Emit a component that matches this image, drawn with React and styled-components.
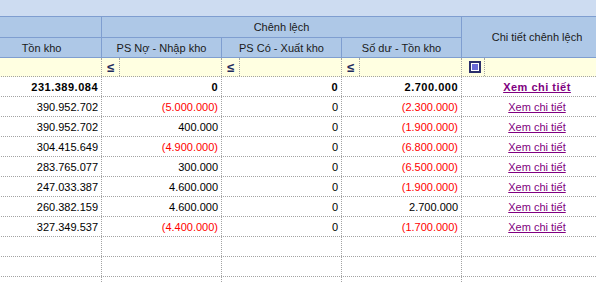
import React from 'react';
import styled, { createGlobalStyle } from 'styled-components';

const GlobalStyle = createGlobalStyle`
    html, body { margin: 0; padding: 0; background: #fff; }
    body { font-family: "Liberation Sans", Arial, sans-serif; font-size: 11px; color: #000; }
`;

const COLS = '120px 120px 120px 120px 150px';

const Viewport = styled.div`
    width: 596px;
    height: 283px;
    overflow: hidden;
    background: #fff;
`;

const Sheet = styled.div`
    width: 630px;
    margin-left: -18px;
`;

const TopBand = styled.div`
    height: 16px;
    background: #cddcf1;
    border-bottom: 1px solid #7f9ed0;
`;

const Header = styled.div`
    display: grid;
    grid-template-columns: ${COLS};
    grid-template-rows: 21px 20px;
    background: #aec8e7;
`;

const HeadCell = styled.div`
    box-sizing: border-box;
    display: flex;
    align-items: center;
    justify-content: center;
    color: #1a1a1a;
    border-bottom: 1px solid #7f9ed0;
    border-right: ${p => (p.$last ? 'none' : '1px solid #7f9ed0')};
    grid-column: ${p => p.$col || 'auto'};
    grid-row: ${p => p.$row || 'auto'};
    white-space: nowrap;
`;

const Row = styled.div`
    display: grid;
    grid-template-columns: ${COLS};
    height: ${p => (p.$filter ? '19px' : '20px')};
    box-sizing: border-box;
    border-bottom: 1px dotted #a3a3a3;
    background: ${p => (p.$filter ? '#ffffe1' : '#fff')};
`;

const Cell = styled.div`
    box-sizing: border-box;
    display: flex;
    align-items: center;
    justify-content: ${p => (p.$center ? 'center' : 'flex-end')};
    padding: 0 3px;
    border-right: ${p => (p.$last ? 'none' : '1px dotted #a3a3a3')};
    font-weight: ${p => (p.$bold ? 'bold' : 'normal')};
    letter-spacing: ${p => (p.$bold ? '0.5px' : '0')};
    color: ${p => (p.$neg ? '#ff0000' : '#000')};
    white-space: nowrap;
`;

const FilterCell = styled.div`
    box-sizing: border-box;
    display: flex;
    border-right: ${p => (p.$last ? 'none' : '1px dotted #a3a3a3')};
`;

const Operator = styled.div`
    box-sizing: border-box;
    width: ${p => (p.$wide ? '23px' : '18px')};
    padding-left: ${p => (p.$wide ? '3px' : '0')};
    display: flex;
    align-items: center;
    justify-content: center;
    border-right: 1px dotted #a3a3a3;
    color: #1f2a5c;
    font-size: 13px;
    font-weight: bold;
`;

const Check = styled.span`
    box-sizing: border-box;
    width: 12px;
    height: 12px;
    border: 2px solid #2b2f6b;
    background: #fff;
    display: flex;
    align-items: center;
    justify-content: center;
    &::after {
        content: '';
        width: 6px;
        height: 6px;
        background: #6b6bd6;
    }
`;

const DetailLink = styled.a`
    color: #800080;
    text-decoration: underline;
    cursor: pointer;
`;

const rows = [
    { ton: '231.389.084', no: '0', co: '0', du: '2.700.000', bold: true },
    { ton: '390.952.702', no: '(5.000.000)', co: '0', du: '(2.300.000)' },
    { ton: '390.952.702', no: '400.000', co: '0', du: '(1.900.000)' },
    { ton: '304.415.649', no: '(4.900.000)', co: '0', du: '(6.800.000)' },
    { ton: '283.765.077', no: '300.000', co: '0', du: '(6.500.000)' },
    { ton: '247.033.387', no: '4.600.000', co: '0', du: '(1.900.000)' },
    { ton: '260.382.159', no: '4.600.000', co: '0', du: '2.700.000' },
    { ton: '327.349.537', no: '(4.400.000)', co: '0', du: '(1.700.000)' },
];

const isNeg = v => v.startsWith('(');

export default function App() {
    return (
        <Viewport>
            <GlobalStyle />
            <Sheet>
                <TopBand />
                {/* two-level column header */}
                <Header>
                    <HeadCell $col="1" $row="1" />
                    <HeadCell $col="2 / 5" $row="1">Chênh lệch</HeadCell>
                    <HeadCell $col="5" $row="1 / 3" $last>Chi tiết chênh lệch</HeadCell>
                    <HeadCell $col="1" $row="2">Tồn kho</HeadCell>
                    <HeadCell $col="2" $row="2">PS Nợ - Nhập kho</HeadCell>
                    <HeadCell $col="3" $row="2">PS Có - Xuất kho</HeadCell>
                    <HeadCell $col="4" $row="2">Số dư - Tồn kho</HeadCell>
                </Header>
                {/* filter row */}
                <Row $filter>
                    <FilterCell />
                    <FilterCell><Operator>≤</Operator></FilterCell>
                    <FilterCell><Operator>≤</Operator></FilterCell>
                    <FilterCell><Operator>≤</Operator></FilterCell>
                    <FilterCell $last><Operator $wide><Check /></Operator></FilterCell>
                </Row>
                {rows.map((r, i) => (
                    <Row key={i}>
                        <Cell $bold={r.bold}>{r.ton}</Cell>
                        <Cell $bold={r.bold} $neg={isNeg(r.no)}>{r.no}</Cell>
                        <Cell $bold={r.bold}>{r.co}</Cell>
                        <Cell $bold={r.bold} $neg={isNeg(r.du)}>{r.du}</Cell>
                        <Cell $center $last $bold={r.bold}>
                            <DetailLink>Xem chi tiết</DetailLink>
                        </Cell>
                    </Row>
                ))}
                {[0, 1, 2].map(i => (
                    <Row key={'e' + i}>
                        <Cell /><Cell /><Cell /><Cell /><Cell $last />
                    </Row>
                ))}
            </Sheet>
        </Viewport>
    );
}
